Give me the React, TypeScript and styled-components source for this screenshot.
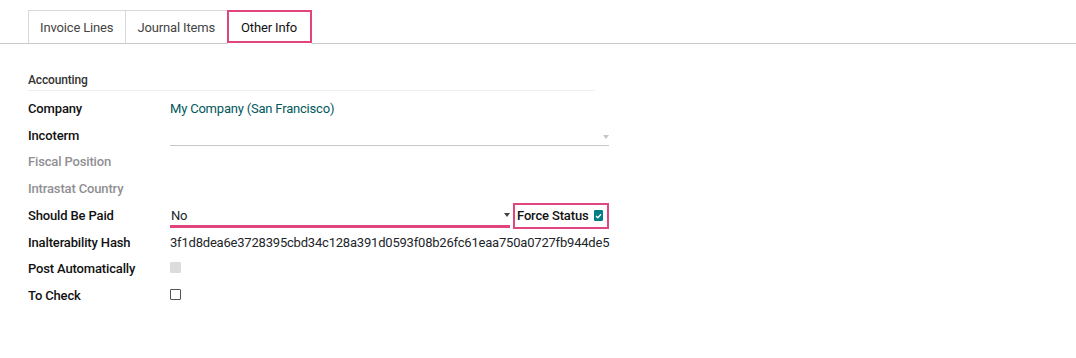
import React from "react";
import styled, { createGlobalStyle } from "styled-components";

const GlobalStyle = createGlobalStyle`
  html, body {
    margin: 0;
    padding: 0;
    background: #fff;
  }
  body {
    font-family: Roboto, "Noto Sans", "Liberation Sans", sans-serif;
    font-size: 13px;
    letter-spacing: -0.15px;
    color: #212529;
  }
`;

const Page = styled.div`
  width: 1076px;
  height: 358px;
  padding-top: 10px;
  box-sizing: border-box;
`;

const TabBar = styled.div`
  display: flex;
  padding-left: 28px;
  border-bottom: 1px solid #c9c9c9;
  height: 33px;
`;

const Tab = styled.div<{ $marked?: boolean }>`
  position: relative;
  display: flex;
  align-items: center;
  padding: ${({ $marked }) => ($marked ? "0 14px 0 13px" : "0 12px 0 11px")};
  height: 34px;
  box-sizing: border-box;
  border: 1px solid #d8d8d8;
  border-left-width: 0;
  border-bottom: ${({ $marked }) => ($marked ? "1px solid #fff" : "1px solid #c9c9c9")};
  color: ${({ $marked }) => ($marked ? "#111" : "#444")};
  background: #fff;
  font-size: 13px;

  &:first-child {
    border-left-width: 1px;
  }
`;

const Highlight = styled.span`
  position: absolute;
  inset: -1px -1px 0 -1px;
  border: 2.5px solid #e0467d;
  pointer-events: none;
`;

const Content = styled.div`
  padding: 29px 0 0 28px;
`;

const Group = styled.div`
  width: 581px;
`;

const GroupTitle = styled.div`
  font-size: 12px;
  font-weight: 500;
  color: #333;
  padding-bottom: 3px;
  border-bottom: 1px solid #eeeeee;
  width: 567px;
  margin-bottom: 4px;
`;

const Row = styled.div`
  display: grid;
  grid-template-columns: 142px 1fr;
  align-items: center;
  height: 26.75px;
`;

const Label = styled.div<{ $muted?: boolean }>`
  font-weight: 500;
  font-size: 13px;
  color: ${({ $muted }) => ($muted ? "#8f8f94" : "#111")};
`;

const Value = styled.div<{ $link?: boolean }>`
  color: ${({ $link }) => ($link ? "#01585c" : "#212529")};
  font-size: 13px;
  white-space: nowrap;
  letter-spacing: -0.2px;
`;

const SelectField = styled.div<{ $accent?: boolean; $width: number }>`
  position: relative;
  flex-shrink: 0;
  align-self: end;
  width: ${({ $width }) => $width}px;
  height: ${({ $accent }) => ($accent ? "26px" : "24px")};
  box-sizing: border-box;
  display: flex;
  align-items: center;
  padding: ${({ $accent }) => ($accent ? "4px 0 0 1px" : "0 0 0 1px")};
  border-bottom: ${({ $accent }) => ($accent ? "3px solid #e0467d" : "1px solid #c8c8c8")};
  margin-bottom: ${({ $accent }) => ($accent ? "1px" : "3px")};
`;

const Caret = styled.span<{ $light?: boolean }>`
  position: absolute;
  right: 0;
  top: ${({ $light }) => ($light ? "13px" : "11px")};
  width: 0;
  height: 0;
  border-left: 3.5px solid transparent;
  border-right: 3.5px solid transparent;
  border-top: 4px solid ${({ $light }) => ($light ? "#c6c6c6" : "#444")};
`;

const InlineRow = styled.div`
  display: flex;
  align-items: flex-end;
  height: 27px;
`;

const ForceBox = styled.div`
  display: flex;
  flex-shrink: 0;
  align-items: center;
  align-self: center;
  gap: 5px;
  margin-left: 3px;
  width: 96px;
  height: 26px;
  padding: 0 4px 0 2px;
  box-sizing: border-box;
  border: 2.5px solid #e0467d;
  font-weight: 500;
  color: #111;
  white-space: nowrap;
`;

const Check = styled.span<{ $checked?: boolean; $disabled?: boolean }>`
  display: inline-flex;
  align-items: center;
  justify-content: center;
  width: 11px;
  height: 11px;
  box-sizing: border-box;
  border: ${({ $checked, $disabled }) =>
    $checked ? "1px solid #017e84" : $disabled ? "1px solid #dcdcde" : "1px solid #555"};
  background: ${({ $checked, $disabled }) =>
    $checked ? "#017e84" : $disabled ? "#dcdcde" : "#fff"};
  border-radius: 1px;
`;

function CheckMark() {
  return (
    <svg width="7" height="6" viewBox="0 0 7 6">
      <path d="M1 3 L2.8 4.7 L6 1.2" stroke="#fff" strokeWidth="1.3" fill="none" />
    </svg>
  );
}

export default function App() {
  return (
    <>
      <GlobalStyle />
      <Page>
        <TabBar>
          <Tab>Invoice Lines</Tab>
          <Tab>Journal Items</Tab>
          <Tab $marked>
            Other Info
            <Highlight />
          </Tab>
        </TabBar>
        <Content>
          <Group>
            <GroupTitle>Accounting</GroupTitle>
            <Row>
              <Label>Company</Label>
              <Value $link>My Company (San Francisco)</Value>
            </Row>
            <Row>
              <Label>Incoterm</Label>
              <SelectField $width={439}>
                <Caret $light />
              </SelectField>
            </Row>
            <Row>
              <Label $muted>Fiscal Position</Label>
              <Value />
            </Row>
            <Row>
              <Label $muted>Intrastat Country</Label>
              <Value />
            </Row>
            <Row>
              <Label>Should Be Paid</Label>
              <InlineRow>
                <SelectField $accent $width={340}>
                  No
                  <Caret />
                </SelectField>
                <ForceBox>
                  Force Status
                  <Check $checked>
                    <CheckMark />
                  </Check>
                </ForceBox>
              </InlineRow>
            </Row>
            <Row>
              <Label>Inalterability Hash</Label>
              <Value>3f1d8dea6e3728395cbd34c128a391d0593f08b26fc61eaa750a0727fb944de5</Value>
            </Row>
            <Row>
              <Label>Post Automatically</Label>
              <div>
                <Check $disabled />
              </div>
            </Row>
            <Row>
              <Label>To Check</Label>
              <div>
                <Check />
              </div>
            </Row>
          </Group>
        </Content>
      </Page>
    </>
  );
}
